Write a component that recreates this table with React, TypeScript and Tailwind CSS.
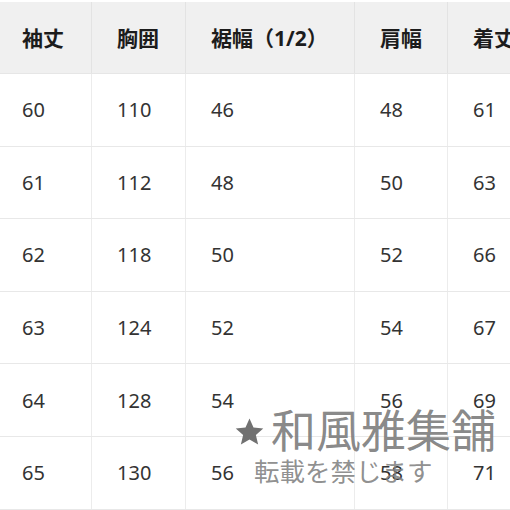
const headers = ['袖丈', '胸囲', '裾幅（1/2）', '肩幅', '着丈'];

const rows = [
  ['60', '110', '46', '48', '61'],
  ['61', '112', '48', '50', '63'],
  ['62', '118', '50', '52', '66'],
  ['63', '124', '52', '54', '67'],
  ['64', '128', '54', '56', '69'],
  ['65', '130', '56', '58', '71'],
];

const widths = ['w-[95px]', 'w-[94px]', 'w-[169px]', 'w-[93px]', 'w-[90px]'];

export default function App() {
  return (
    <div
      className="relative w-[510px] h-[510px] overflow-hidden bg-white"
      style={{ fontFamily: '"Noto Sans", "Noto Sans CJK JP", sans-serif' }}
    >
      <div className="-ml-[3px] w-[541px]">
        <div className="flex h-[74px] bg-[#f0f0f0] border-t-2 border-white border-b border-b-[#e6e6e6]">
          {headers.map((h, i) => (
            <div
              key={h}
              className={`${widths[i]} shrink-0 flex items-center pl-[25px] pt-[3px] text-[21px] font-bold text-[#1c1c1c] whitespace-nowrap border-r border-[#e3e3e3]`}
            >
              {h}
            </div>
          ))}
        </div>
        {rows.map((r) => (
          <div key={r[0]} className="flex h-[72.6px] border-b border-[#e8e8e8]">
            {r.map((c, i) => (
              <div
                key={i}
                className={`${widths[i]} shrink-0 flex items-center pl-[25px] pt-[1px] text-[20px] text-[#333333] border-r border-[#ececec]`}
              >
                {c}
              </div>
            ))}
          </div>
        ))}
      </div>

      <div className="absolute left-[234px] top-[408px] flex items-center text-[#7a7a7a]/90 leading-none">
        <svg width="31" height="30" viewBox="0 0 24 24" className="mr-[6px] mt-[2px]">
          <path
            d="M12 1.2l3.2 7.2 7.8.7-5.9 5.2 1.8 7.7L12 17.9 5.1 22l1.8-7.7L1 9.1l7.8-.7z"
            fill="#717171"
          />
        </svg>
        <span className="text-[45px] leading-none">和風雅集舗</span>
      </div>
      <div className="absolute left-[254px] top-[459px] text-[25.5px] leading-none text-[#828282]/90">
        転載を禁じます
      </div>
    </div>
  );
}
